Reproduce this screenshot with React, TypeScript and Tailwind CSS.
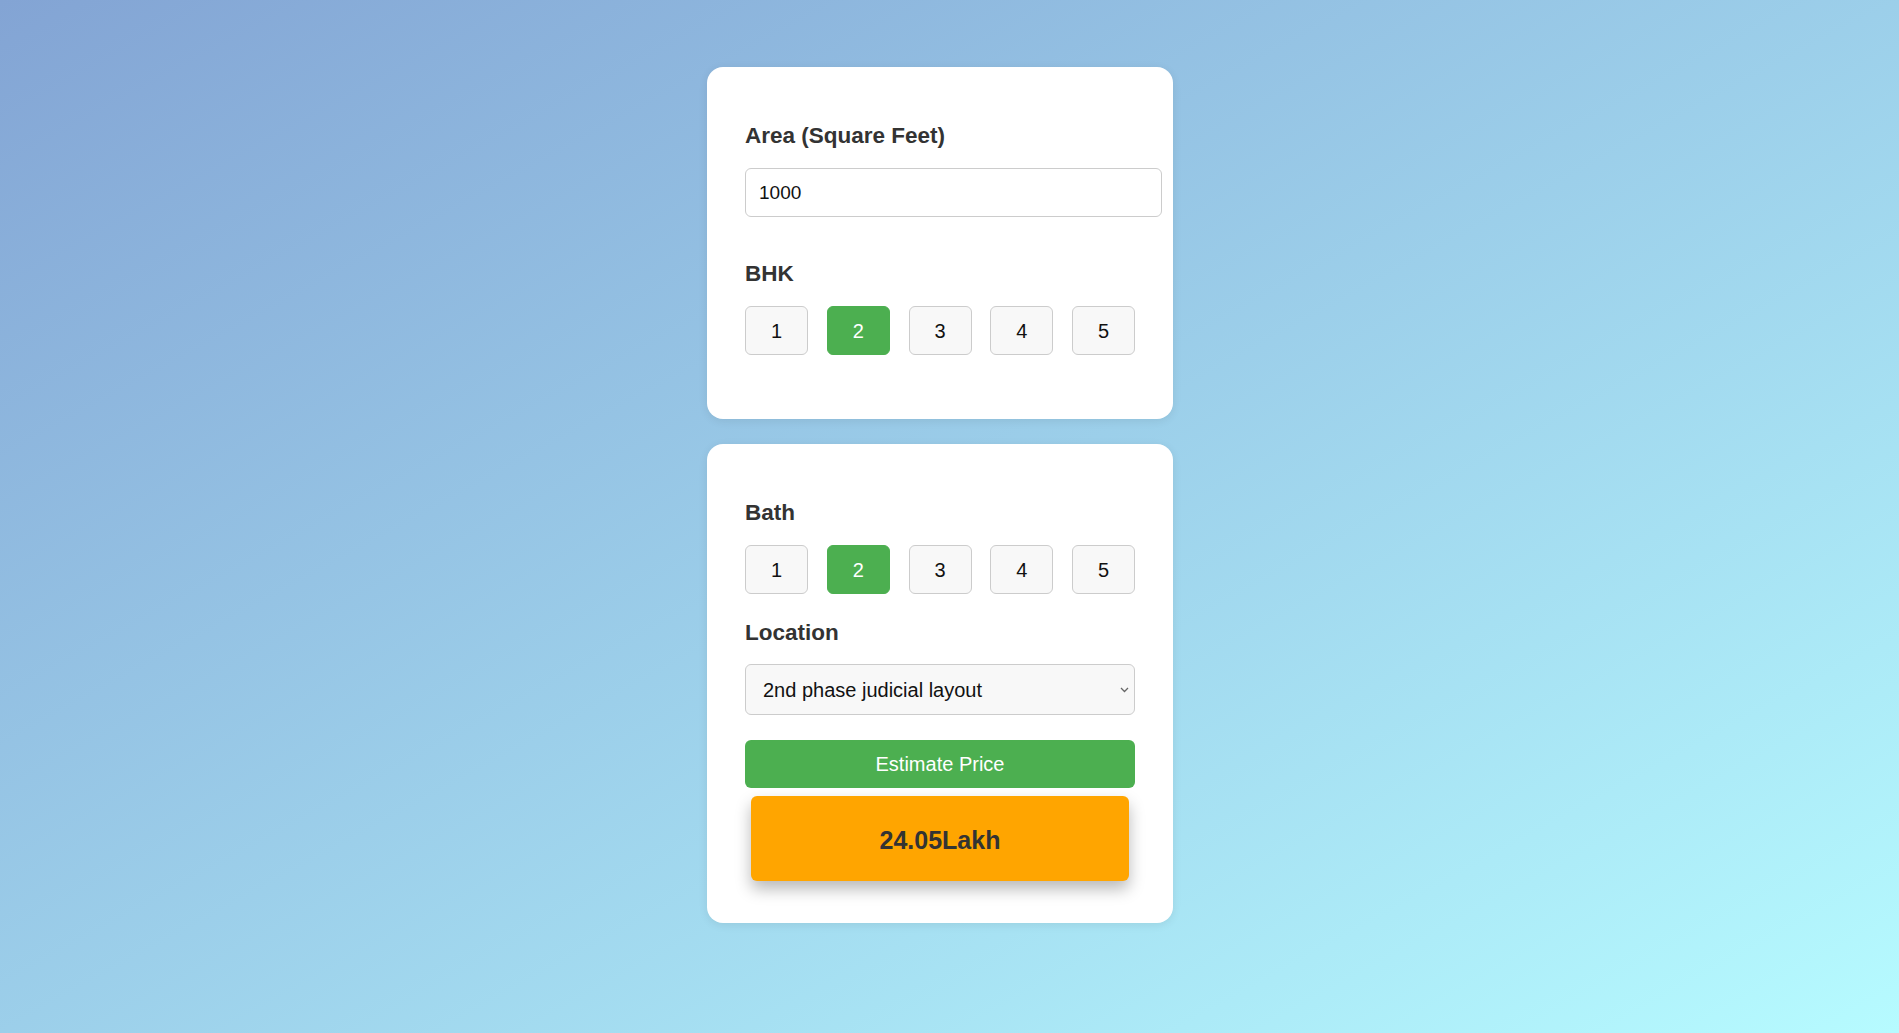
import { useState } from "react";

const options = [1, 2, 3, 4, 5];

const NumberPicker = ({
  value,
  onChange,
}: {
  value: number;
  onChange: (n: number) => void;
}) => (
  <div className="flex justify-between">
    {options.map((n) => (
      <button
        key={n}
        onClick={() => onChange(n)}
        className={
          n === value
            ? "w-[63px] h-[49px] rounded-[6px] border border-[#4caf50] bg-[#4caf50] text-white text-[20px]"
            : "w-[63px] h-[49px] rounded-[6px] border border-[#cccccc] bg-[#f8f8f8] text-[#111] text-[20px]"
        }
      >
        {n}
      </button>
    ))}
  </div>
);

const App = () => {
  const [area, setArea] = useState("1000");
  const [bhk, setBhk] = useState(2);
  const [bath, setBath] = useState(2);

  return (
    <div className="min-h-screen w-full bg-gradient-to-br from-[#83a4d4] to-[#b6fbff] flex flex-col items-center pt-[67px] pb-10 pr-[19px] font-['Liberation_Sans',Arial,sans-serif]">
      <div className="w-[466px] bg-white rounded-[16px] px-[38px] pt-[56px] pb-[64px] shadow-[0_2px_10px_rgba(0,0,0,0.08)]">
        <label className="block text-[22.5px] font-bold text-[#333] leading-[25px]">
          Area (Square Feet)
        </label>
        <input
          value={area}
          onChange={(e) => setArea(e.target.value)}
          className="mt-[20px] w-[417px] h-[49px] rounded-[6px] border border-[#cccccc] bg-white px-[13px] text-[19px] text-[#111] outline-none"
        />
        <label className="block mt-[44px] text-[22.5px] font-bold text-[#333] leading-[25px]">
          BHK
        </label>
        <div className="mt-[20px]">
          <NumberPicker value={bhk} onChange={setBhk} />
        </div>
      </div>

      <div className="mt-[25px] w-[466px] bg-white rounded-[16px] px-[38px] pt-[56px] pb-[42px] shadow-[0_2px_10px_rgba(0,0,0,0.08)]">
        <label className="block text-[22.5px] font-bold text-[#333] leading-[25px]">
          Bath
        </label>
        <div className="mt-[20px]">
          <NumberPicker value={bath} onChange={setBath} />
        </div>
        <label className="block mt-[26px] text-[22.5px] font-bold text-[#333] leading-[25px]">
          Location
        </label>
        <div className="relative mt-[19px]">
          <select className="w-full h-[51px] appearance-none rounded-[6px] border border-[#cccccc] bg-[#f8f8f8] pl-[17px] pr-8 text-[20px] text-[#111] outline-none">
            <option>2nd phase judicial layout</option>
            <option>Electronic City</option>
            <option>Whitefield</option>
          </select>
          <svg
            className="pointer-events-none absolute right-[6px] top-[23px]"
            width="9"
            height="6"
            viewBox="0 0 9 6"
            fill="none"
          >
            <path d="M1 1l3.5 3.5L8 1" stroke="#666" strokeWidth="1.3" />
          </svg>
        </div>
        <button className="mt-[25px] w-full h-[48px] rounded-[6px] bg-[#4caf50] text-white text-[20px]">
          Estimate Price
        </button>
        <div className="mx-[6px] mt-[8px] h-[85px] rounded-[6px] bg-[#ffa500] flex items-center justify-center shadow-[0_8px_16px_rgba(0,0,0,0.28)]">
          <span className="text-[25px] font-bold text-[#333] pt-[4px]">24.05Lakh</span>
        </div>
      </div>
    </div>
  );
};

export default App;
